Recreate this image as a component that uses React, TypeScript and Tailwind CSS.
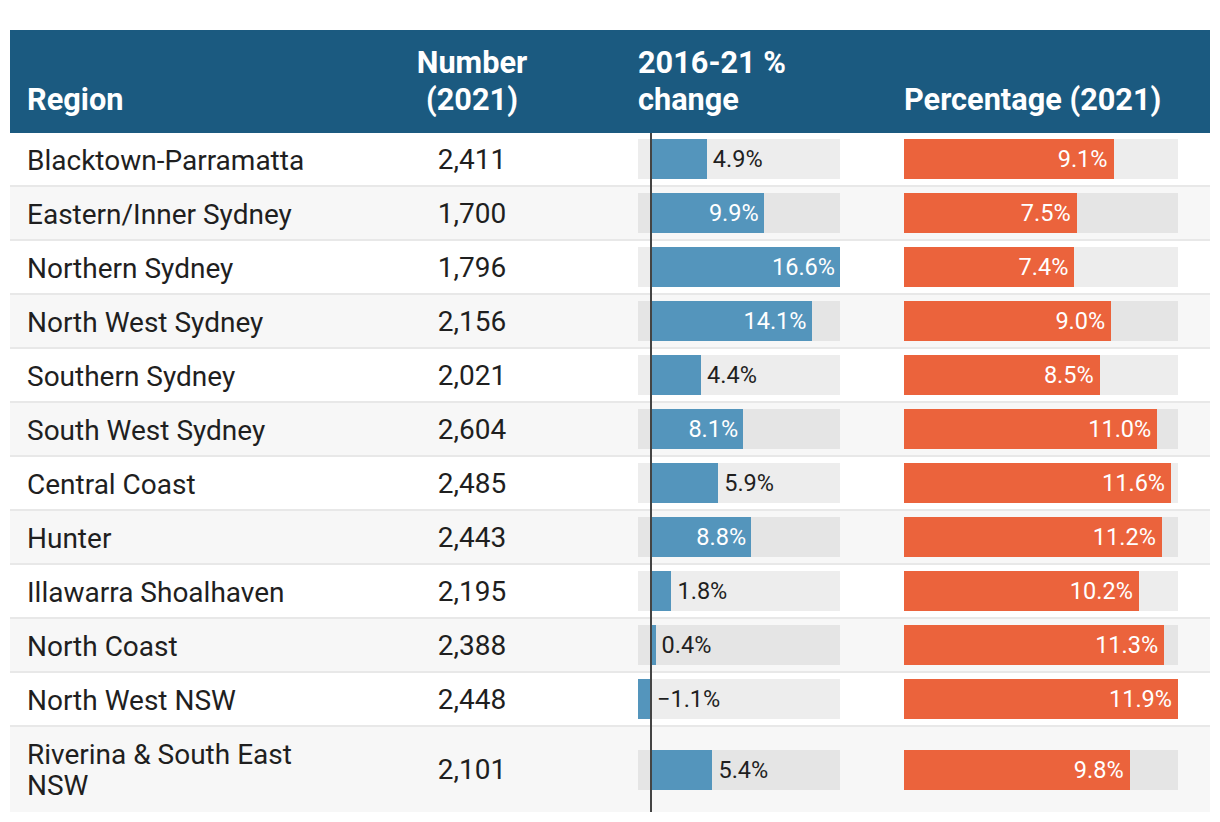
import React from 'react';

type Row = { region: string; number: string; change: number; pct: number };

const rows: Row[] = [
  { region: 'Blacktown-Parramatta', number: '2,411', change: 4.9, pct: 9.1 },
  { region: 'Eastern/Inner Sydney', number: '1,700', change: 9.9, pct: 7.5 },
  { region: 'Northern Sydney', number: '1,796', change: 16.6, pct: 7.4 },
  { region: 'North West Sydney', number: '2,156', change: 14.1, pct: 9.0 },
  { region: 'Southern Sydney', number: '2,021', change: 4.4, pct: 8.5 },
  { region: 'South West Sydney', number: '2,604', change: 8.1, pct: 11.0 },
  { region: 'Central Coast', number: '2,485', change: 5.9, pct: 11.6 },
  { region: 'Hunter', number: '2,443', change: 8.8, pct: 11.2 },
  { region: 'Illawarra Shoalhaven', number: '2,195', change: 1.8, pct: 10.2 },
  { region: 'North Coast', number: '2,388', change: 0.4, pct: 11.3 },
  { region: 'North West NSW', number: '2,448', change: -1.1, pct: 11.9 },
  { region: 'Riverina & South East NSW', number: '2,101', change: 5.4, pct: 9.8 },
];

// change bar: 202px track, zero sits 13px in, 16.6% reaches the end
const ZERO = 13;
const CHANGE_PX = 189 / 16.6;
// percentage bar: 274px track, 11.9% fills it
const PCT_PX = 274 / 11.9;

const fmt = (v: number) => (v < 0 ? '\u2212' + Math.abs(v).toFixed(1) : v.toFixed(1)) + '%';

function ChangeBar({ value }: { value: number }) {
  const w = Math.abs(value) * CHANGE_PX;
  const left = value < 0 ? ZERO - w : ZERO;
  const inside = value >= 7;
  return (
    <div className="relative h-10 w-[202px] bg-black/[0.07]">
      <div className="absolute top-0 h-10 bg-[#5495bc]" style={{ left, width: w }} />
      {inside ? (
        <span
          className="absolute top-0 h-10 pr-[5px] text-right text-[23.5px] leading-10 text-white"
          style={{ left, width: w }}
        >
          {fmt(value)}
        </span>
      ) : (
        <span
          className="absolute top-0 text-[23.5px] leading-10 text-[#1f1f1f]"
          style={{ left: (value < 0 ? ZERO : ZERO + w) + 6 }}
        >
          {fmt(value)}
        </span>
      )}
    </div>
  );
}

function PctBar({ value }: { value: number }) {
  return (
    <div className="relative h-10 w-[274px] bg-black/[0.07]">
      <div
        className="h-10 bg-[#eb633c] pr-[6px] text-right text-[23.5px] leading-10 text-white"
        style={{ width: value * PCT_PX }}
      >
        {fmt(value)}
      </div>
    </div>
  );
}

const cols = 'grid grid-cols-[320px_284px_266px_330px]';

export default function App() {
  return (
    <div className="min-h-screen bg-white pt-[30px] px-[10px] font-['Roboto',sans-serif] text-[#1f1f1f]">
      <div className="w-[1200px]">
        {/* Header */}
        <div className={`${cols} items-end bg-[#1b5a80] pt-[14px] pb-[15px] text-[30.7px] font-bold leading-[37px] text-white`}>
          <div className="pl-[17px]">Region</div>
          <div className="text-center">
            Number
            <br />
            (2021)
          </div>
          <div className="pl-[24px]">
            2016-21 %
            <br />
            change
          </div>
          <div className="pl-[24px]">Percentage (2021)</div>
        </div>

        {/* Body */}
        <div className="relative">
          {rows.map((r, i) => (
            <div
              key={r.region}
              className={`${cols} items-center ${i > 0 ? 'border-t-2 border-[#e8e8e8]' : ''} ${
                i % 2 === 1 ? 'bg-[#f7f7f7]' : 'bg-white'
              }`}
            >
              <div
                className={`pt-[12px] pl-[17px] text-[28px] leading-[31px] ${
                  i === rows.length - 1 ? 'pb-[11px]' : 'pb-[9px]'
                }`}
              >
                {r.region}
              </div>
              <div className="text-center text-[28px] leading-[31px]">{r.number}</div>
              <div className="pl-[24px]">
                <ChangeBar value={r.change} />
              </div>
              <div className="pl-[24px]">
                <PctBar value={r.pct} />
              </div>
            </div>
          ))}
          {/* zero axis */}
          <div className="absolute top-0 bottom-0 left-[640px] w-[2px] bg-[#444]" />
        </div>
      </div>
    </div>
  );
}
